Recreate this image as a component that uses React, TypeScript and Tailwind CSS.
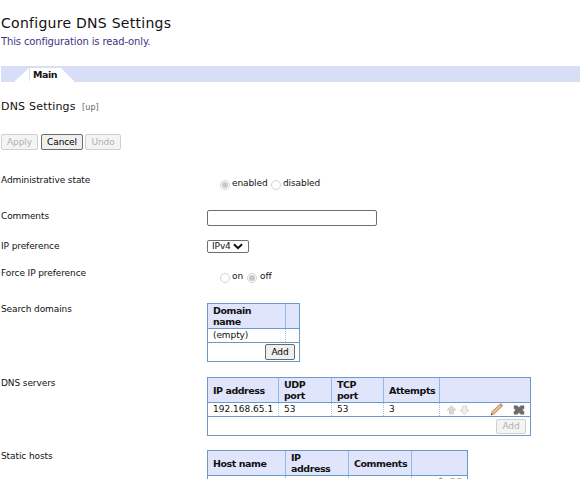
import type { ReactNode } from 'react';

function Row({ label, height, children }: { label: string; height: string; children: ReactNode }) {
  return (
    <div className={`flex shrink-0 items-start ${height}`}>
      <div className="w-[206px] shrink-0 leading-4">{label}</div>
      {children}
    </div>
  );
}

function Button({ children, disabled, className }: { children: string; disabled?: boolean; className: string }) {
  return (
    <button
      disabled={disabled}
      className={`flex items-center justify-center rounded-[2px] border leading-none ${disabled ? 'border-[#d0d0d0] bg-[#f4f4f4] text-[#b0b0b0]' : 'border-[#6b6b6b] bg-[#efefef] text-black'} ${className}`}
    >
      {children}
    </button>
  );
}

function Radio({ checked }: { checked?: boolean }) {
  return (
    <span className="mt-[4px] flex size-[10px] shrink-0 items-center justify-center rounded-full border border-[#d2d2d2] bg-white">
      {checked && <span className="size-[6px] rounded-full bg-[#c8c8c8]" />}
    </span>
  );
}

function Head({ children, last }: { children?: ReactNode; last?: boolean }) {
  return (
    <div className={`flex items-center bg-[#e0e5fb] pl-[5px] text-[9.5px] font-bold leading-[11px] tracking-[-0.45px] ${last ? '' : 'border-r border-[#8db8e8]'}`}>
      {children}
    </div>
  );
}

function Cell({ children, last }: { children?: ReactNode; last?: boolean }) {
  return (
    <div className={`flex items-center pl-[5px] leading-none ${last ? '' : 'border-r border-dotted border-[#9fbfe6]'}`}>
      {children}
    </div>
  );
}

function Arrow({ down }: { down?: boolean }) {
  return (
    <svg width="11" height="10" viewBox="0 0 11 10" className={down ? 'rotate-180' : ''}>
      <path d="M5.5 .7 10 5H7.5v4h-4V5H1Z" fill={down ? '#f1f1e9' : '#d9d9d2'} stroke="#cdcdc5" strokeWidth=".8" />
    </svg>
  );
}

function Pencil() {
  return (
    <svg width="14" height="13" viewBox="0 0 14 13">
      <path d="m1 12 1.2-3.6L9.8 1.3q1-.8 2 .1t.2 2L4.3 10.8Z" fill="#e0ad6c" stroke="#a98b68" strokeWidth=".8" />
      <path d="m3.4 9.6 7-6.8" stroke="#f6d8a5" />
      <path d="m9.5 1.6 2.4 2.1.6-.8q.3-1-.6-1.7t-1.6-.3Z" fill="#c8948c" />
      <path d="m.8 12.2.7-2 1.3 1.3Z" fill="#555" />
    </svg>
  );
}

function Cross() {
  return (
    <svg width="12" height="10" viewBox="0 0 12 10">
      <path d="M1 .8h3.2L6 2.5 7.8.8H11v2.5L9.4 5 11 6.7v2.5H7.8L6 7.5 4.2 9.2H1V6.7L2.6 5 1 3.3Z" fill="#6d6d6d" stroke="#666" strokeWidth=".5" />
    </svg>
  );
}

export default function App() {
  return (
    <div className="flex h-[479px] w-[580px] flex-col overflow-hidden bg-white pl-px font-['DejaVu_Sans',Verdana,sans-serif] text-[9px] tracking-[-0.1px] text-[#111]">
      <h1 className="mt-[13px] h-5 shrink-0 text-[14px] leading-5 tracking-[0.27px]">Configure DNS Settings</h1>
      <p className="h-[18px] shrink-0 text-[10px] leading-[18px] tracking-[-0.13px] text-[#3e3584]">This configuration is read-only.</p>
      <div className="mt-[15px] flex h-4 shrink-0 bg-[#d8def8]">
        <svg width="73" height="16" viewBox="0 0 73 16">
          <path d="M13 16 28 2h32l14 14Z" fill="white" />
          <path d="M28.5 2v13" stroke="#dfe2ed" />
          <text x="32" y="12" fontSize="9.5" fontWeight="700" letterSpacing="-.45" fill="#111">Main</text>
        </svg>
      </div>
      <div className="mt-[17px] flex h-4 shrink-0 items-center">
        <h2 className="w-[81px] text-[11px] tracking-[0.2px]">DNS Settings</h2>
        <span className="pt-px text-[8px] tracking-[0.1px] text-[#666]">[up]</span>
      </div>
      <div className="mt-[19px] flex h-4 shrink-0">
        <Button disabled className="mr-[3px] w-[37px]">Apply</Button>
        <Button className="mr-[2px] w-[42px]">Cancel</Button>
        <Button disabled className="w-[36px]">Undo</Button>
      </div>
      <div className="mt-[22px] flex flex-col">
        <Row label="Administrative state" height="h-9">
          <div className="flex h-[14px] pl-[13px] pt-[4px] leading-[14px]">
            <Radio checked /><span className="ml-[2px] w-[39px]">enabled</span>
            <Radio /><span className="ml-[2px]">disabled</span>
          </div>
        </Row>
        <Row label="Comments" height="h-[30px]">
          <input aria-label="Comments" className="mt-[2px] h-4 w-[170px] rounded-[2px] border border-[#6e6e6e] bg-white" />
        </Row>
        <Row label="IP preference" height="h-[27px]">
          <div className="mt-[2px] flex h-[13px] w-[42px] items-center rounded-[2px] border border-[#6e6e6e] pl-[4px] leading-none">
            IPv4
            <svg width="10" height="7" viewBox="0 0 10 7" className="ml-[2px]"><path d="m1 1.2 4 4 4-4" fill="none" stroke="#111" strokeWidth="2" /></svg>
          </div>
        </Row>
        <Row label="Force IP preference" height="h-9">
          <div className="flex h-[14px] pl-[13px] pt-[4px] leading-[14px]">
            <Radio /><span className="ml-[2px] w-[15px]">on</span>
            <Radio checked /><span className="ml-[3px]">off</span>
          </div>
        </Row>
        <Row label="Search domains" height="h-[74px]">
          <div className="mt-[2px] w-[93px] border border-[#6d99c6]">
            <div className="grid h-[25px] grid-cols-[78px_1fr] border-b border-[#6d99c6]">
              <Head>Domain<br />name</Head><Head last />
            </div>
            <div className="grid h-[14px] grid-cols-[78px_1fr] border-b border-[#6d99c6]">
              <Cell>(empty)</Cell><Cell last />
            </div>
            <div className="flex h-[18px] items-center justify-end pr-1"><Button className="h-4 w-[30px]">Add</Button></div>
          </div>
        </Row>
        <Row label="DNS servers" height="h-[73px]">
          <div className="mt-[2px] w-[324px] border border-[#6d99c6]">
            <div className="grid h-[25px] grid-cols-[71px_53px_52px_56px_1fr] border-b border-[#6d99c6]">
              <Head>IP address</Head><Head>UDP<br />port</Head><Head>TCP<br />port</Head><Head>Attempts</Head><Head last />
            </div>
            <div className="grid h-[14px] grid-cols-[71px_53px_52px_56px_1fr] border-b border-[#6d99c6]">
              <Cell><span className="tracking-normal">192.168.65.1</span></Cell><Cell>53</Cell><Cell>53</Cell><Cell>3</Cell>
              <Cell last>
                <span className="flex w-[45px] gap-[2px] pl-px"><Arrow /><Arrow down /></span>
                <span className="flex items-center gap-[9px]"><Pencil /><Cross /></span>
              </Cell>
            </div>
            <div className="flex h-[18px] items-center justify-end pr-1"><Button disabled className="h-[15px] w-[30px]">Add</Button></div>
          </div>
        </Row>
        <Row label="Static hosts" height="h-[45px]">
          <div className="mt-[2px] w-[261px] border border-[#6d99c6]">
            <div className="grid h-[25px] grid-cols-[78px_63px_63px_1fr] border-b border-[#6d99c6]">
              <Head>Host name</Head><Head>IP<br />address</Head><Head>Comments</Head><Head last />
            </div>
            <div className="grid h-[14px] grid-cols-[78px_63px_63px_1fr]">
              <Cell><span className="mb-[8px] ml-[38px] size-px bg-[#777]" /></Cell><Cell /><Cell />
              <Cell last><span className="ml-[13px] flex items-center gap-[6px]"><Pencil /><Cross /></span></Cell>
            </div>
          </div>
        </Row>
      </div>
    </div>
  );
}
